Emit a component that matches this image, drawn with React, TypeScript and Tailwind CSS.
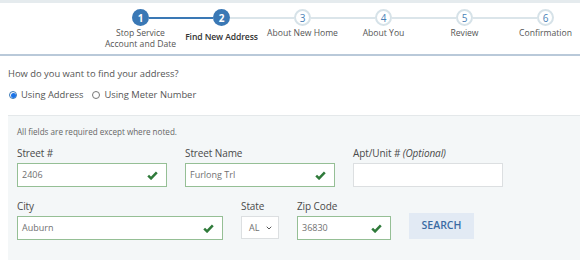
import { ChevronDown } from 'lucide-react';

const steps = [
  { n: 1, label: ['Stop Service', 'Account and Date'], state: 'done' },
  { n: 2, label: ['Find New Address'], state: 'current' },
  { n: 3, label: ['About New Home'], state: 'todo' },
  { n: 4, label: ['About You'], state: 'todo' },
  { n: 5, label: ['Review'], state: 'todo' },
  { n: 6, label: ['Confirmation'], state: 'todo' },
];

const Check = () => (
  <svg width="11" height="9" viewBox="0 0 12 10" className="shrink-0">
    <path d="M1.2 5.2 L4.4 8.2 L10.8 1.6" fill="none" stroke="#2f7a3a" strokeWidth="2.8" strokeLinejoin="miter" />
  </svg>
);

const Field = ({ label, value, width, valid = true, optional = false }: { label: string; value?: string; width: string; valid?: boolean; optional?: boolean }) => (
  <div className={`flex flex-col ${width}`}>
    <label className="text-[10px] tracking-[-0.1px] leading-[14px] text-[#4a4a4a] mb-[3px] whitespace-nowrap">
      {label}
      {optional && <em className="italic"> (Optional)</em>}
    </label>
    <div
      className={`h-[24px] bg-white border flex items-center pl-[4px] pr-[8px] ${
        valid ? 'border-[#95bf95]' : 'border-[#dcdfe1]'
      }`}
    >
      <span className="flex-1 text-[9px] text-[#707070]">{value}</span>
      {valid && <Check />}
    </div>
  </div>
);

export default function App() {
  return (
    <div className="w-[580px] h-[261px] overflow-hidden bg-white font-['Open_Sans',sans-serif]">
      {/* Stepper header */}
      <div className="h-[56px] border-t-[3px] border-[#e5ebee] border-b-2 border-b-[#b9c9d9]">
        <div className="flex pt-[6px]">
          <div className="w-[100px] shrink-0" />
          {steps.map((s, i) => (
            <div key={s.n} className="w-[81px] shrink-0 flex flex-col items-center">
              <div className="flex items-center w-full h-[17px]">
                <div
                  className={`flex-1 h-[2px] ${
                    i === 0 ? 'bg-transparent' : s.state === 'todo' ? 'bg-[#dbe5ea]' : 'bg-[#3a78b5]'
                  }`}
                />
                {s.state === 'todo' ? (
                  <div className="w-[17px] h-[17px] rounded-full border-2 border-[#d6e2e8] bg-white flex items-center justify-center text-[10px] text-[#4a7fb6] leading-none">
                    {s.n}
                  </div>
                ) : (
                  <div className="w-[17px] h-[17px] rounded-full bg-[#3a78b5] flex items-center justify-center text-[10px] font-bold text-white leading-none">
                    {s.n}
                  </div>
                )}
                <div
                  className={`flex-1 h-[2px] ${
                    i === steps.length - 1 ? 'bg-transparent' : s.state === 'done' ? 'bg-[#3a78b5]' : 'bg-[#dbe5ea]'
                  }`}
                />
              </div>
              <div
                className={`text-center leading-[11px] whitespace-nowrap ${
                  s.state === 'current'
                    ? 'font-semibold text-[#333] mt-[6px] text-[8.6px] tracking-[-0.1px]'
                    : 'text-[#555] mt-[2px] text-[8.6px]'
                }`}
              >
                {s.label.map((l) => (
                  <div key={l}>{l}</div>
                ))}
              </div>
            </div>
          ))}
        </div>
      </div>

      {/* Address lookup */}
      <div className="pl-[8px]">
        <p className="pt-[11px] text-[9.4px] leading-[14px] text-[#555]">How do you want to find your address?</p>
        <div className="mt-[7px] flex items-center text-[9.4px] leading-[14px] text-[#555]">
          <span className="w-[8px] h-[8px] rounded-full border border-[#3a78b5] flex items-center justify-center mr-[4px] ml-[1px]">
            <span className="w-[5px] h-[5px] rounded-full bg-[#1a73e8]" />
          </span>
          <span>Using Address</span>
          <span className="w-[8px] h-[8px] rounded-full border border-[#777] ml-[9px] mr-[4px]" />
          <span>Using Meter Number</span>
        </div>

        <div className="mt-[13px] border-t border-[#e4e8ea] bg-[#f4f7f8] pl-[9px] pt-[10px] pb-[20px]">
          <p className="text-[8.1px] leading-[12px] text-[#666]">All fields are required except where noted.</p>
          <div className="mt-[8px] flex gap-[18px]">
            <Field label="Street #" value="2406" width="w-[150px]" />
            <Field label="Street Name" value="Furlong Trl" width="w-[150px]" />
            <Field label="Apt/Unit #" width="w-[150px]" valid={false} optional />
          </div>
          <div className="mt-[12px] flex gap-[18px] items-start">
            <Field label="City" value="Auburn" width="w-[206px]" />
            <div className="flex flex-col w-[38px]">
              <label className="text-[10px] tracking-[-0.1px] leading-[14px] text-[#4a4a4a] mb-[3px]">State</label>
              <div className="h-[23px] bg-white border border-[#dcdfe1] flex items-center justify-between pl-[7px] pr-[5px] text-[9px] text-[#707070]">
                <span>AL</span>
                <ChevronDown size={8} strokeWidth={3} className="text-[#555]" />
              </div>
            </div>
            <Field label="Zip Code" value="36830" width="w-[94px]" />
            <button className="mt-[14px] h-[26px] w-[65px] bg-[#e2eaf4] text-[#3a6aa3] text-[10.5px] font-semibold">
              SEARCH
            </button>
          </div>
        </div>
      </div>
    </div>
  );
}
